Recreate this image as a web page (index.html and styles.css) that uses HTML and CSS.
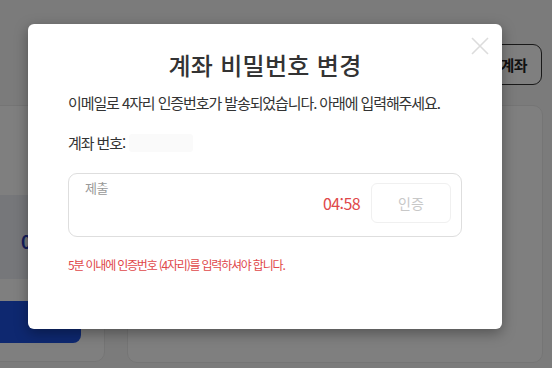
FILE: index.html
```html
<!DOCTYPE html>
<html lang="ko">

<head>
  <meta charset="UTF-8">
  <meta name="viewport" content="width=device-width, initial-scale=1.0">
  <title>계좌 비밀번호 변경</title>
  <link rel="stylesheet" href="styles.css">
</head>

<body>
  <div class="page">
    <div class="topBar">
      <button class="outlineBtn">계좌</button>
    </div>
    <div class="cards">
      <div class="card leftCard">
        <div class="balance">
          <span class="balanceNum">0</span>
        </div>
        <button class="blueBtn"></button>
      </div>
      <div class="card rightCard"></div>
    </div>
  </div>

  <div class="overlay">
    <div class="modal">
      <span class="close">
        <svg width="18" height="18" viewBox="0 0 18 18">
          <path d="M1 1L17 17M17 1L1 17" stroke="#dcdcdc" stroke-width="1.6" fill="none" />
        </svg>
      </span>
      <h1 class="modalTitle">계좌 비밀번호 변경</h1>
      <p class="desc">이메일로 4자리 인증번호가 발송되었습니다. 아래에 입력해주세요.</p>
      <p class="account">계좌 번호: <span class="accountNum"></span></p>

      <div class="codeBox">
        <label class="codeLabel">제출</label>
        <div class="codeRow">
          <span class="timer">04:58</span>
          <button class="verifyBtn">인증</button>
        </div>
      </div>

      <p class="notice">5분 이내에 인증번호 (4자리)를 입력하셔야 합니다.</p>
    </div>
  </div>
</body>

</html>
```

FILE: styles.css
```css
body {
  margin: 0;
  font-family: "Noto Sans CJK KR", "Noto Sans", sans-serif;
  background-color: #f7f7f7;
  width: 552px;
  height: 368px;
  overflow: hidden;
  position: relative;
}

/* page behind the popup */
.page {
  padding-top: 44px;
}

.topBar {
  display: flex;
  justify-content: flex-end;
  padding-right: 10px;
}

.outlineBtn {
  width: 80px;
  height: 41px;
  background: #fff;
  border: 1px solid #333;
  border-radius: 9px;
  font-family: inherit;
  font-size: 15px;
  font-weight: bold;
  color: #222;
  padding: 0 14px 0 0;
  text-align: right;
  letter-spacing: -0.5px;
}

.cards {
  display: flex;
  gap: 22px;
  margin-top: 20px;
  margin-left: -20px;
}

.card {
  background: #fff;
  border: 1px solid #eaeaea;
  border-radius: 10px;
  height: 255px;
}

.leftCard {
  width: 123px;
  display: flex;
  flex-direction: column;
}

.balance {
  margin-top: 89px;
  height: 84px;
  background: #eceff5;
  display: flex;
  align-items: center;
  padding-left: 40px;
}

.balanceNum {
  font-size: 18px;
  font-weight: bold;
  color: #2a3cb8;
  margin-top: 8px;
}

.blueBtn {
  margin-top: 22px;
  width: 100px;
  height: 42px;
  background: #1d50e0;
  border: none;
  border-radius: 0 8px 8px 0;
}

.rightCard {
  width: 414px;
  height: 256px;
}

/* popup */
.overlay {
  position: absolute;
  top: 0;
  left: 0;
  right: 0;
  bottom: 0;
  background: rgba(0, 0, 0, 0.5);
  padding: 24px 0 0 28px;
}

.modal {
  position: relative;
  width: 474px;
  height: 305px;
  box-sizing: border-box;
  background: #fff;
  border-radius: 6px;
  padding: 24px 40px 0 40px;
  box-shadow: 0 4px 14px rgba(0, 0, 0, 0.35);
}

.modal .close {
  position: absolute;
  top: 13px;
  right: 13px;
  line-height: 0;
  cursor: pointer;
}

.modalTitle {
  margin: 0;
  text-align: center;
  font-size: 24px;
  font-weight: 500;
  color: #333;
  line-height: 34px;
  letter-spacing: 0.3px;
}

.desc {
  margin: 10px 0 0;
  font-size: 15px;
  line-height: 22px;
  letter-spacing: -1.1px;
  color: #333;
}

.account {
  margin: 18px 0 0;
  font-size: 15px;
  line-height: 22px;
  letter-spacing: -1.1px;
  color: #333;
  display: flex;
  align-items: center;
  gap: 4px;
}

.accountNum {
  display: inline-block;
  width: 64px;
  height: 18px;
  background: #fafafa;
  border-radius: 3px;
}

.codeBox {
  margin-top: 19px;
  height: 64px;
  box-sizing: border-box;
  border: 1px solid #dedede;
  border-radius: 9px;
  padding: 5px 10px 4px 16px;
  display: flex;
  justify-content: space-between;
}

.codeLabel {
  font-size: 13px;
  color: #999;
  line-height: 18px;
  letter-spacing: -0.5px;
}

.codeRow {
  display: flex;
  align-items: center;
  gap: 11px;
  align-self: center;
  margin-top: -5px;
}

.timer {
  font-size: 16px;
  color: #e0484a;
  letter-spacing: -0.6px;
}

.verifyBtn {
  width: 80px;
  height: 40px;
  background: #fff;
  border: 1px solid #f0f0f0;
  border-radius: 6px;
  font-family: inherit;
  font-size: 14px;
  color: #c8c8c8;
  padding: 0;
}

.notice {
  margin: 19px 0 0;
  font-size: 12px;
  line-height: 18px;
  letter-spacing: -1.2px;
  color: #e0484a;
}
```
